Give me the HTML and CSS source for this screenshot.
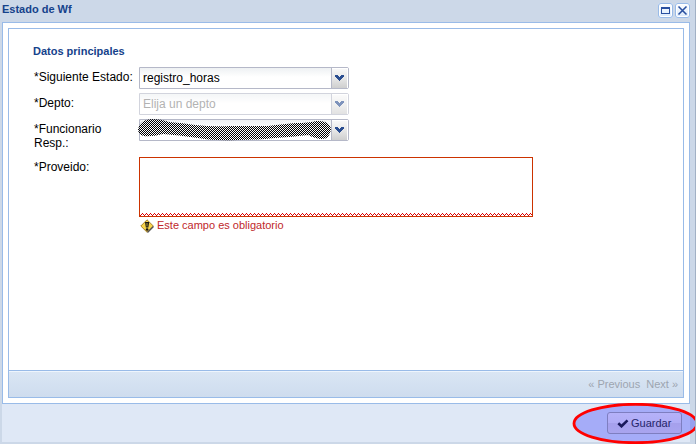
FILE: index.html
```html
<!DOCTYPE html>
<html lang="es">
<head>
<meta charset="utf-8">
<title>Estado de Wf</title>
<link rel="stylesheet" href="styles.css">
</head>
<body>
<div class="window">
  <header class="titlebar">
    <span class="title">Estado de Wf</span>
    <span class="tool"><svg width="15" height="15" shape-rendering="crispEdges"><path d="M3 4h9v7H3zM4 6v4h7V6z" fill="#2a50a0" fill-rule="evenodd"/></svg></span>
    <span class="tool"><svg width="15" height="15"><path d="M3.5 3.5l8 8M11.5 3.5l-8 8" stroke="#2a50a0" stroke-width="1.6"/></svg></span>
  </header>
  <main class="body">
    <div class="panel">
      <form class="form">
        <h2>Datos principales</h2>
        <div class="row"><label>*Siguiente Estado:</label>
          <div class="combo"><span class="value">registro_horas</span><span class="trigger"><svg width="9" height="6" shape-rendering="crispEdges"><path d="M0 0h3v1h1v1h1V1h1V0h3v2H8v1H7v1H6v1H5v1H4V5H3V4H2V3H1V2H0z" fill="#2a4d90"/></svg></span></div></div>
        <div class="row"><label>*Depto:</label>
          <div class="combo disabled"><span class="value">Elija un depto</span><span class="trigger"><svg width="9" height="6" shape-rendering="crispEdges"><path d="M0 0h3v1h1v1h1V1h1V0h3v2H8v1H7v1H6v1H5v1H4V5H3V4H2V3H1V2H0z" fill="#2a4d90"/></svg></span></div></div>
        <div class="row person"><label>*Funcionario Resp.:</label>
          <div class="combo"><span class="value"></span><span class="trigger"><svg width="9" height="6" shape-rendering="crispEdges"><path d="M0 0h3v1h1v1h1V1h1V0h3v2H8v1H7v1H6v1H5v1H4V5H3V4H2V3H1V2H0z" fill="#2a4d90"/></svg></span>
            <svg class="redaction" width="196" height="24"><defs><pattern id="dots" width="2" height="2" patternUnits="userSpaceOnUse"><path d="M0 0h1v1H0zM1 1h1v1H1z" fill="#000" shape-rendering="crispEdges"/></pattern></defs><path d="M0 10Q2 1 13 0Q24 0 31 3Q45 4 57 6Q75 8 92 7Q115 7 130 7Q147 5 158 4Q170 4 178 2Q192 1 193 10Q192 20 184 20Q178 20 170 16Q155 18 137 19Q120 21 99 21Q76 22 60 19Q40 16 25 15Q13 18 6 17Q0 16 0 10Z" fill="url(#dots)"/></svg>
          </div></div>
        <div class="row note"><label>*Proveido:</label>
          <div class="textarea"></div></div>
        <div class="error"><svg width="15" height="15"><path d="M7 .8l6.3 6.2L7 13.2.8 7z" fill="#f7d44a" stroke="#a78332"/><path d="M7.5 13.5l6-6" stroke="#555" stroke-width="1.3"/><path d="M5 3h4.2L8.3 8.5H5.9z" fill="#111"/><path d="M7 4v3.5" stroke="#e8c84b" stroke-width=".8"/><circle cx="7.1" cy="10.5" r="1.3" fill="#111"/></svg><span>Este campo es obligatorio</span></div>
      </form>
      <nav class="pager"><span>« Previous</span><span>Next »</span></nav>
    </div>
  </main>
  <footer class="footer">
    <div class="save"><svg width="12" height="9"><path d="M1.3 4.3L4.5 7.3 10.5 1.4" fill="none" stroke="#222" stroke-width="2.6"/></svg><span>Guardar</span></div>
  </footer>
  <svg class="highlight" width="126" height="42"><ellipse cx="63.5" cy="20.5" rx="61.5" ry="19.2" fill="#0000ff" fill-opacity=".26" stroke="#f00" stroke-width="2.8"/></svg>
</div>
</body>
</html>
```
FILE: styles.css
```css
* { box-sizing: border-box; }
body { margin: 0; overflow: hidden; font-family: "Liberation Sans", Arial, sans-serif; font-size: 12px; line-height: 14px; color: #000; }
svg { display: block; flex: none; }
.window { position: relative; width: 696px; height: 444px; padding: 0 5px 2px 2px; border-right: 1px solid #a2b1c5; background: #ccd8e8; display: flex; flex-direction: column; overflow: hidden; }
.titlebar { height: 22px; display: flex; align-items: flex-start; gap: 2px; padding-top: 3px; }
.title { flex: 1; margin-top: -1px; font-size: 11px; font-weight: bold; color: #15428b; }
.tool { width: 15px; height: 15px; border-radius: 3px; background: linear-gradient(#fff, #d7e8fb); box-shadow: inset 0 0 0 1px #99bbe8, inset 0 0 0 2px #fff; }
.body { height: 382px; flex: none; width: 688px; border: 1px solid #99bbe8; background: #fff; padding: 5px; }
.panel { height: 370px; border: 1px solid #99bbe8; display: flex; flex-direction: column; }
.form { flex: 1; padding: 15px 24px 0; }
h2 { margin: 0; height: 23px; font-size: 11px; line-height: 15px; color: #15428b; }
.row { height: 22px; margin-bottom: 4px; display: flex; }
.row label { width: 105px; padding: 3px 0 0 1px; margin-right: 1px; flex: none; }
.person { height: 34px; }
.note { height: 60px; margin-bottom: 1px; }
.combo { position: relative; width: 210px; height: 22px; border: 1px solid #b5b8c8; border-radius: 0 2px 2px 0; display: flex; background: linear-gradient(#eef1f3, #fff 9px); }
.value { flex: 1; padding: 3px; }
.trigger { width: 17px; border-left: 1px solid #b5b8c8; box-shadow: inset -1px 1px #fff; background: linear-gradient(#fafafa, #e8e8e8 50%, #cfcfcf); padding: 7px 0 0 3px; }
.disabled { opacity: .6; }
.disabled .value { color: gray; }
.redaction { position: absolute; left: -2px; top: -1px; }
.textarea { width: 394px; height: 60px; border: 1px solid #cc3300; background: #fff; position: relative; }
.textarea::after {
  content: ""; position: absolute; left: 0; right: 0; bottom: 0; height: 3px;
  background-image:
    linear-gradient(90deg, transparent 2px, #d00 2px 3px, transparent 3px),
    linear-gradient(90deg, transparent 1px, #d00 1px 2px, transparent 2px 3px, #d00 3px),
    linear-gradient(90deg, #d00 1px, transparent 1px);
  background-size: 4px 1px;
  background-position: 0 0, 0 1px, 0 2px;
  background-repeat: repeat-x;
}
.error { display: flex; margin-left: 107px; gap: 2px; font-size: 11px; color: #c0272b; }
.error svg { margin-top: 1px; }
.pager { height: 27px; flex: none; border-top: 1px solid #99bbe8; box-shadow: inset 0 1px #eef5fd; background: linear-gradient(#dae6f4, #cedcee); display: flex; justify-content: flex-end; gap: 6px; padding: 6px 5px 0; font-size: 11px; line-height: 15px; color: #9da5b0; }
.footer { height: 38px; width: 688px; flex: none; background: #dfe8f6; display: flex; justify-content: flex-end; padding: 8px 8px 0; }
.save { width: 75px; height: 22px; border: 1px solid #aaa; border-radius: 3px; background: linear-gradient(#f5f0f7, #ede8f2 50%, #dfd8e6 51%, #e4deea); display: flex; align-items: center; padding-left: 9px; gap: 2px; font-size: 11px; color: #333; }
.highlight { position: absolute; left: 572px; top: 403px; }
```
